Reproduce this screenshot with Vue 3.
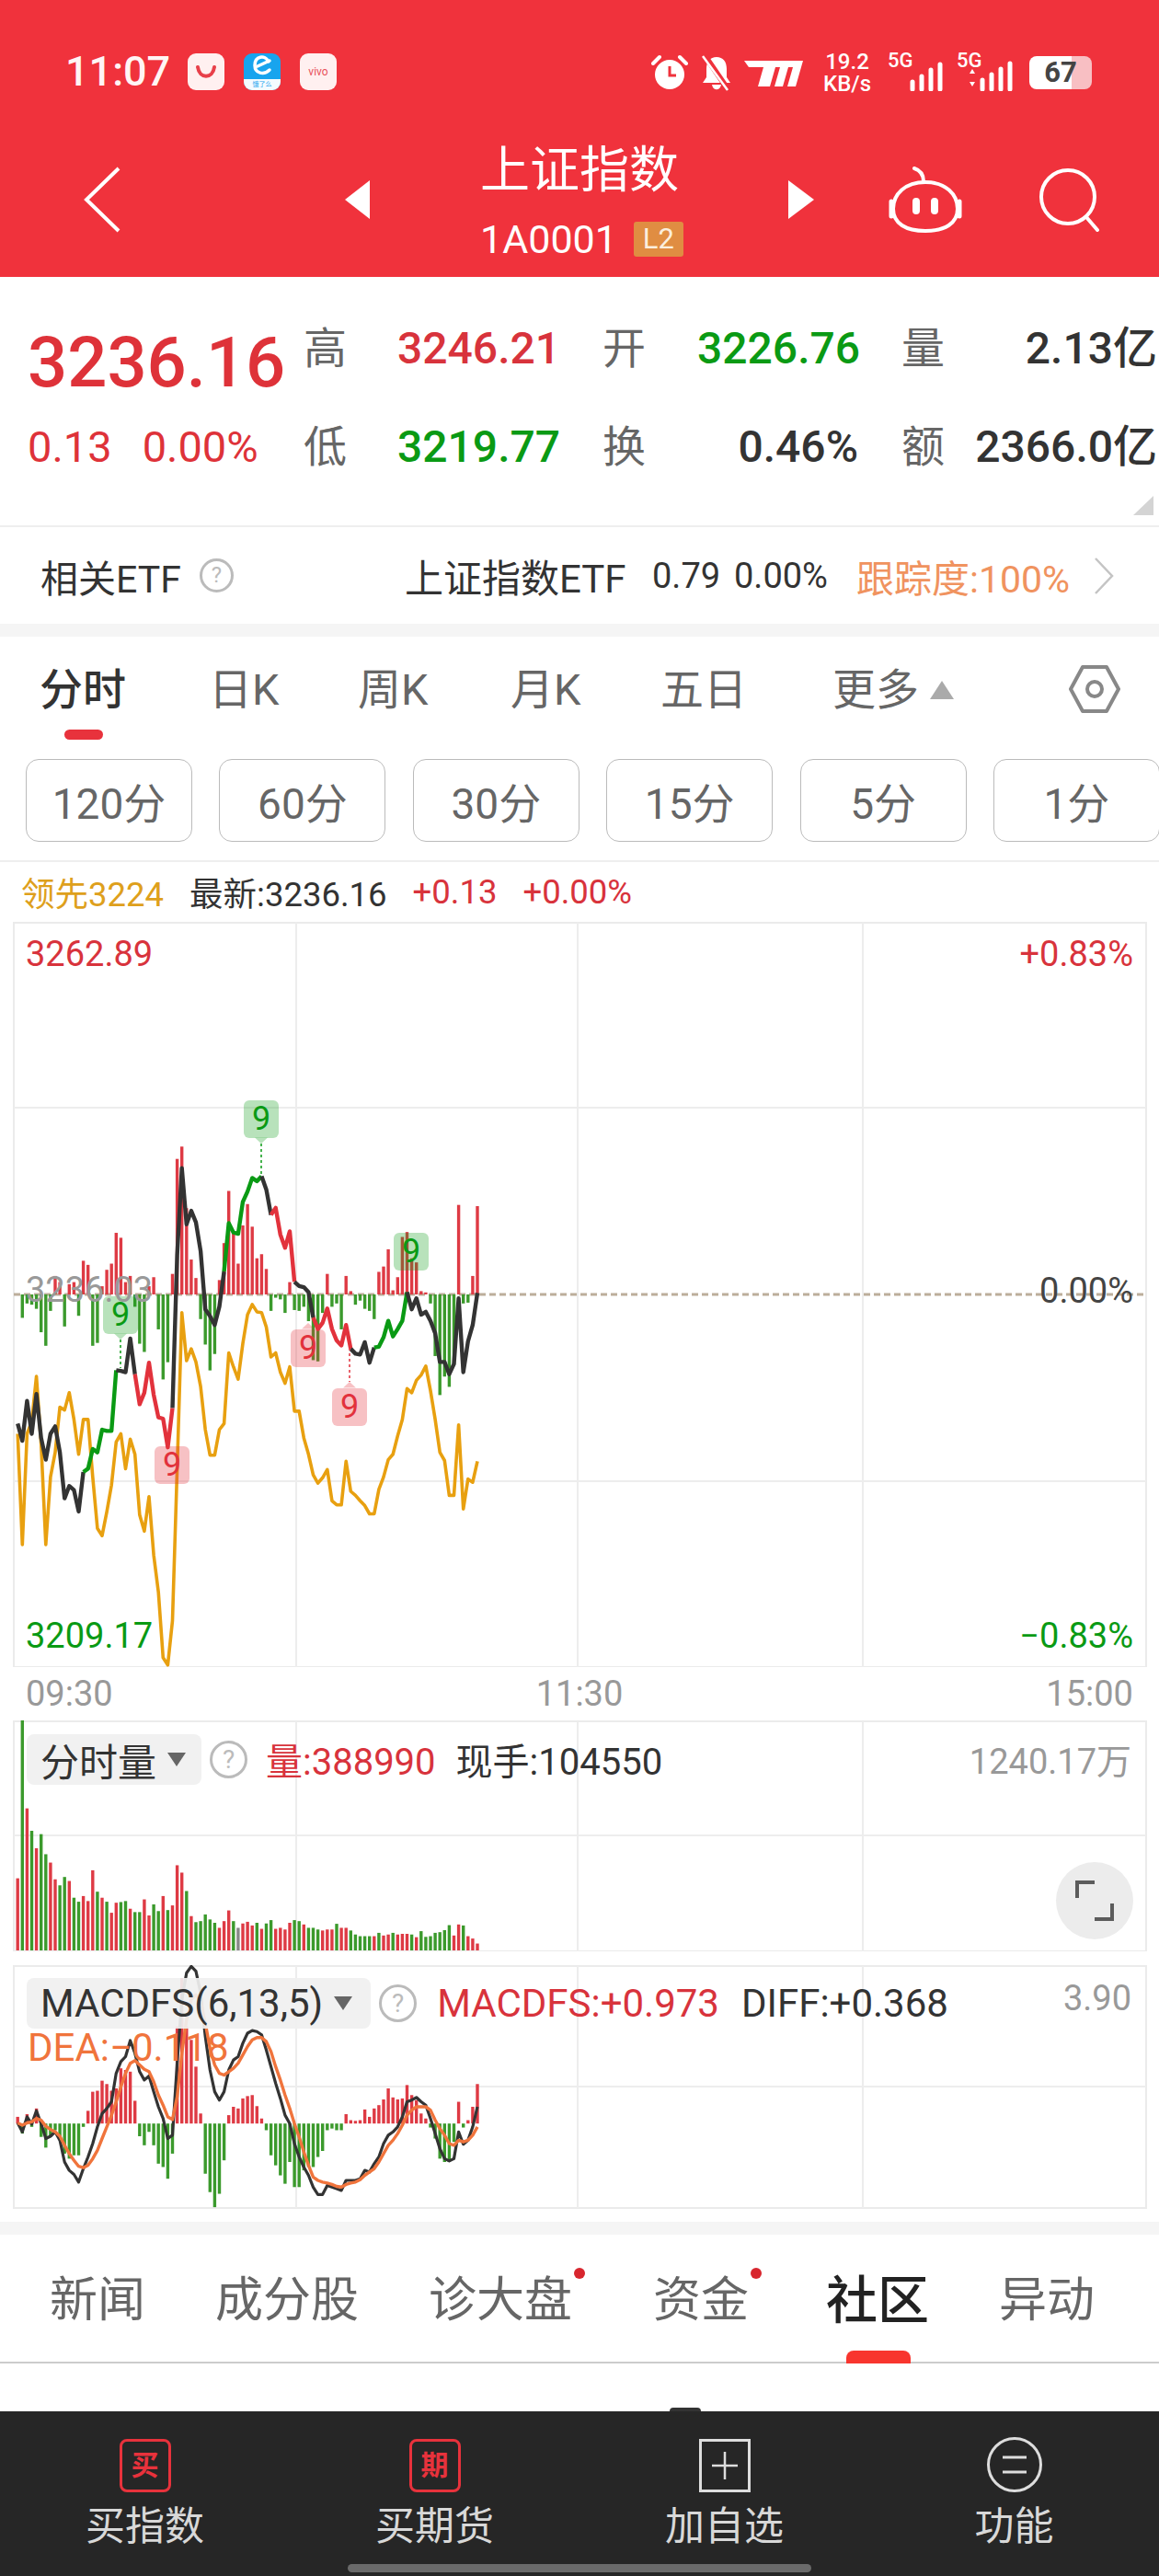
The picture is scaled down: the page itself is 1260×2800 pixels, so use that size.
<template>
  <div class="page">
    <header class="top">
      <div class="status">
        <span class="clock">11:07</span>
        <span class="app-ico white">
          <svg width="24" height="14" viewBox="0 0 24 14"><path d="M3 2c2 13 16 13 18 0" fill="none" stroke="#e8404a" stroke-width="4" stroke-linecap="round" /></svg>
        </span>
        <span class="app-ico blue">
          <svg width="30" height="28" viewBox="0 0 30 28"><path d="M22 9C18 1 7 3 7 13c0 9 10 11 16 5M10 14l13-6" fill="none" stroke="#fff" stroke-width="3.5" stroke-linecap="round" /></svg>
          <em>饿了么</em>
        </span>
        <span class="app-ico white vivo">vivo</span>
        <div class="status-right">
          <svg class="st-alarm" width="40" height="40" viewBox="0 0 40 40">
            <circle cx="20" cy="22" r="16" fill="#fff" />
            <path d="M20 13v10h7" fill="none" stroke="#ef323c" stroke-width="3" />
            <path d="M2 10l7-7M38 10l-7-7" stroke="#fff" stroke-width="4" stroke-linecap="round" />
          </svg>
          <svg class="st-bell" width="34" height="40" viewBox="0 0 34 40">
            <path d="M17 3c-7 0-11 5-11 13v9l-4 6h30l-4-6v-9c0-8-4-13-11-13zM12 33c1 7 9 7 10 0z" fill="#fff" />
            <path d="M4 1l26 38" stroke="#ef323c" stroke-width="6" />
            <path d="M2 2l27 37" stroke="#fff" stroke-width="2.5" />
          </svg>
          <svg class="st-logo" width="64" height="30" viewBox="0 0 64 30">
            <path d="M0 2h64l-8 28h-9l6-21h-5l-6 21h-9l6-21h-5l-6 21H15l6-21H5z" fill="#fff" />
          </svg>
          <span class="speed"><b>19.2</b><b>KB/s</b></span>
          <span class="signal">
            <i class="net">5G</i>
            <svg width="44" height="34" viewBox="0 0 44 34"><path d="M3 24v8M13 18v14M23 11v21M33 5v27" stroke="#fff" stroke-width="5" stroke-linecap="round" transform="translate(4 0)" /></svg>
          </span>
          <span class="signal second">
            <i class="net">5G</i>
            <svg width="54" height="34" viewBox="0 0 54 34"><path d="M3 15l3-5 3 5zM3 24l3 5 3-5z" fill="#fff" /><path d="M17 22v10M27 16v16M37 10v22M47 4v28" stroke="#fff" stroke-width="5" stroke-linecap="round" /></svg>
          </span>
          <span class="battery"><span class="bat-num">67</span></span>
        </div>
      </div>
      <div class="nav">
        <svg class="back" width="42" height="74" viewBox="0 0 42 74"><path d="M39 3L4 37l35 34" fill="none" stroke="#fff" stroke-width="4" /></svg>
        <span class="tri tri-left"></span>
        <div class="title-block">
          <div class="title">上证指数</div>
          <div class="code">1A0001<span class="l2">L2</span></div>
        </div>
        <span class="tri tri-right"></span>
        <svg class="robot" width="80" height="72" viewBox="0 0 80 72">
          <path d="M28 2c6 2 10 6 10 14" fill="none" stroke="#fff" stroke-width="4" stroke-linecap="round" />
          <path d="M40 17C18 17 5 30 5 46c0 16 14 24 35 24s35-8 35-24c0-16-13-29-35-29z" fill="none" stroke="#fff" stroke-width="4" />
          <path d="M3 38v16M77 38v16" stroke="#fff" stroke-width="5" stroke-linecap="round" />
          <path d="M30 38v10M50 38v10" stroke="#fff" stroke-width="8" stroke-linecap="round" />
        </svg>
        <svg class="search" width="68" height="70" viewBox="0 0 68 70"><circle cx="32" cy="32" r="29" fill="none" stroke="#fff" stroke-width="4" /><path d="M52 54l12 14" stroke="#fff" stroke-width="4" stroke-linecap="round" /></svg>
      </div>
    </header>

    <section class="quote">
      <div class="quote-grid">
        <div class="big-price">3236.16</div>
        <span class="lab">高</span><span class="val red">3246.21</span>
        <span class="lab">开</span><span class="val green">3226.76</span>
        <span class="lab last-col">量</span><span class="val dark end">2.13亿</span>

        <div class="change"><span>0.13</span><span>0.00%</span></div>
        <span class="lab">低</span><span class="val green">3219.77</span>
        <span class="lab">换</span><span class="val dark end">0.46%</span>
        <span class="lab last-col">额</span><span class="val dark end">2366.0亿</span>
      </div>
      <div class="corner-row"><span class="corner"></span></div>
    </section>

    <section class="etf">
      <span class="etf-name">相关ETF</span>
      <span class="qmark etf-q">?</span>
      <span class="etf-fund">上证指数ETF</span>
      <span class="etf-num">0.79</span>
      <span class="etf-num second">0.00%</span>
      <span class="etf-track">跟踪度:100%</span>
      <svg class="etf-arrow" width="24" height="42" viewBox="0 0 24 42"><path d="M3 2l18 19L3 40" fill="none" stroke="#c4c4c4" stroke-width="2.5" /></svg>
    </section>

    <div class="band"></div>

    <nav class="periods">
      <span class="period active">分时</span>
      <span class="period">日K</span>
      <span class="period">周K</span>
      <span class="period">月K</span>
      <span class="period">五日</span>
      <span class="period more">更多<i class="up"></i></span>
      <svg class="hex" width="56" height="54" viewBox="0 0 56 54">
        <path d="M15 3h26l13 24-13 24H15L2 27z" fill="none" stroke="#888" stroke-width="4" stroke-linejoin="round" />
        <circle cx="28" cy="27" r="8" fill="none" stroke="#888" stroke-width="4" />
      </svg>
    </nav>

    <div class="minutes">
      <button v-for="m in minutes" :key="m" class="minute">{{ m }}</button>
    </div>

    <div class="legend">
      <span class="gold">领先3224</span>
      <span class="ink">最新:3236.16</span>
      <span class="red">+0.13</span>
      <span class="red">+0.00%</span>
    </div>

    <div class="chart price">
      <svg width="1260" height="810" viewBox="0 0 1260 810">
        <rect x="15" y="1" width="1231" height="809" class="frame" />
        <path d="M15 202H1246M15 608H1246M322 1V810M628 1V810M938 1V810" class="grid" />
        <line x1="15" y1="405" x2="1246" y2="405" class="zero" />
        <rect
          v-for="b in priceBars" :key="b.x"
          :x="b.x" :y="b.y" width="3.4" :height="b.h" :fill="b.fill"
        />
        <polyline :points="goldLine" class="line gold-line" />
        <polyline
          v-for="s in priceSegments" :key="s.from"
          :points="s.points" :stroke="s.color" class="line thick"
        />
        <g v-for="t in tags" :key="t.x">
          <line v-if="t.stem" :x1="t.x" :x2="t.x" :y1="t.stem[0]" :y2="t.stem[1]" :stroke="t.color" class="stem" />
          <rect :x="t.x - 19" :y="t.y - 20" width="38" height="41" rx="6" :fill="t.bg" />
          <polygon v-if="t.dir" :points="`${t.x - 7},${t.y + t.dir * 20.5} ${t.x + 7},${t.y + t.dir * 20.5} ${t.x},${t.y + t.dir * 27}`" :fill="t.bg" />
          <text :x="t.x" :y="t.y + 12" text-anchor="middle" :fill="t.color" class="tag-text">9</text>
        </g>
      </svg>
      <span class="tick tl red">3262.89</span>
      <span class="tick tr red">+0.83%</span>
      <span class="tick ml">3236.03</span>
      <span class="tick mr ink-soft">0.00%</span>
      <span class="tick bl green">3209.17</span>
      <span class="tick br green">−0.83%</span>
    </div>

    <div class="times"><span>09:30</span><span>11:30</span><span>15:00</span></div>

    <div class="chart volume">
      <svg width="1260" height="251" viewBox="0 0 1260 251">
        <rect x="15" y="1" width="1231" height="250" class="frame" />
        <path d="M15 125H1246M322 1V251M628 1V251M938 1V251" class="grid" />
        <rect
          v-for="b in volumeBars" :key="b.x"
          :x="b.x" :y="b.y" width="3.4" :height="b.h" :fill="b.fill"
        />
      </svg>
      <div class="indicator-row vol-row">
        <span class="chip">分时量<i class="down"></i></span>
        <span class="qmark chip-q">?</span>
        <span class="red ind-a">量:388990</span>
        <span class="ink ind-b">现手:104550</span>
      </div>
      <span class="scale vol-scale">1240.17万</span>
      <span class="expand">
        <svg width="44" height="46" viewBox="0 0 44 46"><path d="M3 20V3h19M41 26v17H22" fill="none" stroke="#5c5c5c" stroke-width="4" /></svg>
      </span>
    </div>

    <div class="chart macd">
      <svg width="1260" height="265" viewBox="0 0 1260 265">
        <rect x="15" y="1" width="1231" height="263" class="frame" />
        <path d="M15 132H1246M322 1V264M628 1V264M938 1V264" class="grid" />
        <rect
          v-for="b in macdBars" :key="b.x"
          :x="b.x" :y="b.y" width="3.4" :height="b.h" :fill="b.fill"
        />
        <polyline :points="macdLine" class="line dark-line" />
        <polyline :points="deaLine" class="line dea-line" />
      </svg>
      <div class="indicator-row macd-row">
        <span class="chip">MACDFS(6,13,5)<i class="down"></i></span>
        <span class="qmark chip-q">?</span>
        <span class="red ind-a">MACDFS:+0.973</span>
        <span class="ink ind-b">DIFF:+0.368</span>
      </div>
      <span class="dea">DEA:−0.118</span>
      <span class="scale macd-scale">3.90</span>
    </div>

    <div class="band bottom-band"></div>

    <nav class="news-tabs">
      <span class="news">新闻</span>
      <span class="news">成分股</span>
      <span class="news dot">诊大盘</span>
      <span class="news dot">资金</span>
      <span class="news current">社区</span>
      <span class="news">异动</span>
    </nav>

    <div class="blank"><span class="dome"></span></div>

    <footer class="actions">
      <div class="action"><span class="box red-box">买</span><span>买指数</span></div>
      <div class="action"><span class="box red-box">期</span><span>买期货</span></div>
      <div class="action">
        <span class="box plain">
          <svg width="30" height="32" viewBox="0 0 30 32"><path d="M15 1v30M1 16h28" stroke="#ddd" stroke-width="2.5" /></svg>
        </span>
        <span>加自选</span>
      </div>
      <div class="action">
        <span class="box round">
          <svg width="30" height="22" viewBox="0 0 30 22"><path d="M2 3h26M2 19h26" stroke="#ddd" stroke-width="3" /></svg>
        </span>
        <span>功能</span>
      </div>
      <span class="home-bar"></span>
    </footer>
  </div>
</template>

<script setup>
const minutes = ['120分', '60分', '30分', '15分', '5分', '1分']

const RED = '#de3a44'
const GREEN = '#3b9a2c'

// 所有数据都是从截图上量出来的，x 按 99 个点等距排
const xAt = (i) => 19.2 + i * 5.1

// 价格线 y（放大图坐标）
const priceY = [890,932,835,915,818,925,978,915,897,960,1072,1042,1052,1104,1008,1000,952,960,905,908,908,760,762,765,683,770,843,815,742,820,875,878,948,852,480,268,405,372,400,470,612,628,650,605,520,402,425,428,350,325,292,300,288,320,382,365,430,462,422,545,555,558,570,632,660,645,610,660,688,700,650,708,720,722,692,742,705,703,680,640,678,660,640,570,612,585,625,618,640,670,740,740,770,745,585,765,690,650,572]
const goldY = [915,1185,915,885,775,940,1185,1020,960,850,857,815,880,965,880,880,1020,1145,1163,1105,1040,935,915,1000,928,965,1112,1152,1068,1210,1300,1460,1478,1370,1000,620,737,708,740,800,905,967,967,905,890,718,752,782,695,625,600,618,620,655,728,718,765,792,752,860,860,925,965,1015,1035,1022,1002,1078,1088,1088,982,1055,1065,1078,1090,1110,1110,1050,1020,978,965,920,880,805,815,785,772,750,810,880,960,980,1065,1065,893,1098,1025,1033,982]
const flowBars = [0,-57,-22,-25,-35,-92,-125,-40,45,30,-78,25,30,-52,82,72,-125,-118,20,60,75,150,138,30,45,-30,-120,-140,20,42,-85,-207,-165,50,330,360,210,85,40,-60,-122,-185,-145,35,125,252,148,75,168,220,165,88,98,62,-40,-8,-12,-45,30,-38,-40,-30,-65,-160,-163,-45,50,-30,-22,-85,45,8,-25,-15,-35,-40,-60,55,68,110,10,42,140,152,88,78,8,5,-22,-150,-245,-200,-225,-170,218,-22,-20,45,215]
// 量：负数是绿柱
const volumeTops = [527,-52,318,-385,437,-395,-455,480,530,-548,-523,535,-585,-597,580,595,503,-567,585,-597,630,600,-598,-595,618,-628,-628,590,638,-605,-625,580,-622,608,488,510,-565,640,-658,-655,-635,-650,-660,675,655,623,-655,-675,662,657,668,-660,678,-662,-652,678,675,680,660,-652,-655,665,-675,-675,-680,683,680,680,-663,675,675,-683,-695,-700,-700,-700,700,-690,698,695,-690,695,693,693,-695,703,-685,-702,-700,-690,-688,-682,-667,698,665,-668,700,707,722]
const macdHist = [20,-30,28,-10,45,-40,-72,-40,-20,-50,-90,-105,-95,-95,-10,38,95,98,128,118,98,105,165,160,155,68,-38,-65,-25,-65,-120,-130,-165,-90,290,435,290,250,170,30,-150,-205,-250,-210,-110,25,50,45,75,82,85,52,15,-20,-95,-125,-155,-180,-115,-190,-190,-140,-130,-130,-100,-82,-20,-15,-20,-20,28,10,8,10,42,20,45,55,72,105,78,72,75,115,85,70,30,15,-12,-45,-105,-115,-115,-55,65,-12,10,50,118]
const macdY = [1258,1285,1240,1262,1222,1260,1305,1298,1285,1310,1375,1400,1412,1435,1395,1360,1320,1270,1230,1215,1195,1110,1075,1060,1012,1050,1105,1130,1118,1165,1210,1245,1305,1295,1080,890,810,790,805,870,1000,1100,1165,1190,1165,1100,1070,1060,1020,990,982,985,995,1040,1090,1140,1185,1235,1260,1320,1360,1390,1415,1450,1472,1472,1445,1450,1455,1460,1430,1430,1430,1425,1400,1405,1380,1360,1320,1295,1285,1270,1240,1195,1190,1182,1195,1205,1245,1290,1335,1365,1372,1365,1285,1322,1310,1270,1210]
const deaY = [1258,1265,1258,1255,1245,1250,1268,1278,1285,1298,1325,1350,1370,1388,1392,1385,1365,1340,1305,1270,1235,1195,1150,1110,1080,1072,1085,1098,1105,1135,1175,1205,1240,1248,1180,1050,950,890,875,895,960,1035,1085,1110,1115,1105,1095,1080,1055,1030,1010,1003,1003,1015,1045,1090,1130,1175,1215,1260,1300,1345,1385,1420,1430,1435,1438,1442,1448,1450,1442,1438,1435,1428,1415,1405,1395,1375,1350,1325,1310,1290,1265,1235,1220,1210,1210,1210,1220,1250,1275,1295,1320,1325,1310,1315,1310,1295,1270]

const py = (z) => 148 + z / 2.24 // 价格区 svg 内 y
const my = (z) => -286 + z / 2.75 // macd 区 svg 内 y
const vy = (z) => z / 2.75 - 20 // 量区 svg 内 y

const toPoints = (ys, fy, from = 0, to = ys.length - 1) =>
  ys.slice(from, to + 1).map((v, i) => `${xAt(i + from).toFixed(1)},${fy(v).toFixed(1)}`).join(' ')

const goldLine = toPoints(goldY, py)
const macdLine = toPoints(macdY, my)
const deaLine = toPoints(deaY, my)

const priceSegments = [
  [0, 14, '#333'], [14, 21, '#0a9a14'], [21, 25, '#333'], [25, 33, '#e2323c'],
  [33, 44, '#333'], [44, 52, '#0a9a14'], [52, 54, '#333'], [54, 59, '#e2323c'],
  [59, 63, '#333'], [63, 71, '#e2323c'], [71, 76, '#333'], [76, 83, '#0a9a14'],
  [83, 98, '#333'],
].map(([from, to, color]) => ({ from, color, points: toPoints(priceY, py, from, to) }))

const barsFrom = (values, zeroY, scale) =>
  values.map((v, i) => ({
    x: xAt(i) - 1.7,
    y: v >= 0 ? zeroY - v / scale : zeroY,
    h: Math.abs(v) / scale,
    fill: v >= 0 ? RED : GREEN,
  }))

const priceBars = barsFrom(flowBars, 405, 2.24)
const macdBars = barsFrom(macdHist, my(1260), 2.75)
const volumeBars = volumeTops.map((v, i) => ({
  x: xAt(i) - 1.7,
  y: vy(Math.abs(v)),
  h: 250 - vy(Math.abs(v)),
  fill: i === 47 ? '#888' : v >= 0 ? RED : GREEN,
}))

const greenTag = { color: '#0a9a14', bg: 'rgba(20,160,30,.3)' }
const redTag = { color: '#e2323c', bg: 'rgba(230,50,60,.3)' }
const tags = [
  { ...greenTag, x: 284, y: 214, dir: 1, stem: [241, 276] },
  { ...greenTag, x: 131, y: 427, dir: 1, stem: [454, 485] },
  { ...greenTag, x: 447, y: 358, dir: 0 },
  { ...redTag, x: 187, y: 590, dir: 0 },
  { ...redTag, x: 335, y: 463, dir: -1 },
  { ...redTag, x: 380, y: 527, dir: -1, stem: [463, 500] },
]
</script>

<style scoped>
.page {
  width: 1260px;
  height: 2800px;
  background: #fff;
  color: #333;
  font-family: Roboto, "Noto Sans CJK SC", sans-serif;
  overflow: hidden;
}

.red { color: #d8333c; }
.green { color: #0a9a14; }
.dark { color: #333; }
.ink { color: #333; }
.gold { color: #dea01c; }

/* 顶部 */
.top {
  position: relative;
  height: 301px;
  background: #f0323c;
  color: #fff;
}
.status {
  height: 153px;
  box-sizing: border-box;
  padding: 58px 0 0 71px;
  display: flex;
  align-items: flex-start;
}
.clock {
  width: 133px;
  font-size: 45px;
  line-height: 40px;
  font-weight: 500;
  color: #fff5f5;
}
.app-ico {
  width: 40px;
  height: 40px;
  margin-right: 21px;
  border-radius: 9px;
  display: flex;
  flex-direction: column;
  align-items: center;
  justify-content: center;
  overflow: hidden;
}
.app-ico.white { background: #fff0f0; }
.app-ico.blue { background: #18a4ee; justify-content: flex-start; }
.app-ico.blue em {
  width: 100%;
  font-size: 7px;
  line-height: 12px;
  text-align: center;
  font-style: normal;
  background: #f4fbff;
  color: #18a4ee;
}
.vivo {
  font-size: 12px;
  color: #e8505a;
}
.status-right {
  position: absolute;
  top: 58px;
  left: 708px;
  width: 480px;
  height: 42px;
  display: flex;
  align-items: center;
}
.st-bell { margin-left: 14px; }
.st-logo { margin-left: 13px; }
.speed {
  width: 60px;
  margin-left: 18px;
  display: flex;
  flex-direction: column;
  align-items: center;
  font-size: 24px;
  line-height: 24px;
}
.speed b { font-weight: 500; }
.signal {
  position: relative;
  width: 64px;
  height: 40px;
  margin-left: 14px;
  display: flex;
  justify-content: flex-end;
  align-items: flex-end;
}
.signal.second {
  width: 65px;
  margin-left: 11px;
}
.net {
  position: absolute;
  top: -6px;
  left: 0;
  font-style: normal;
  font-size: 22px;
  font-weight: 500;
}
.battery {
  width: 68px;
  height: 36px;
  margin-left: 14px;
  border-radius: 8px;
  background: linear-gradient(90deg, #fff 0, #fff 68%, #f8bfc3 68%);
  display: flex;
  justify-content: center;
}
.bat-num {
  font-size: 31px;
  line-height: 36px;
  font-weight: 700;
  color: #444;
}

.nav {
  height: 127px;
  padding-left: 90px;
  display: flex;
  align-items: center;
}
.tri {
  width: 0;
  height: 0;
  border-top: 21px solid transparent;
  border-bottom: 21px solid transparent;
}
.tri-left { margin-left: 243px; border-right: 27px solid #fff; }
.tri-right { margin-left: 113px; border-left: 28px solid #fff; }
.title-block {
  width: 222px;
  margin-left: 120px;
  align-self: flex-start;
  padding-top: 3px;
}
.title {
  font-size: 54px;
  line-height: 60px;
  margin-bottom: 24px;
  white-space: nowrap;
}
.code {
  display: flex;
  align-items: center;
  height: 40px;
  font-size: 43px;
  white-space: nowrap;
}
.l2 {
  width: 54px;
  height: 38px;
  margin-left: 18px;
  background: #e08d42;
  border-radius: 3px;
  text-align: center;
  font-size: 31px;
  line-height: 38px;
  color: #fbeedd;
}
.robot { margin-left: 81px; }
.search { margin-left: 83px; }

/* 报价 */
.quote {
  height: 272px;
  box-sizing: border-box;
  padding: 24px 2px 0 30px;
  border-bottom: 2px solid #eee;
}
.quote-grid {
  display: grid;
  grid-template-columns: 300px 102px 223px 103px 175px 47px 48px 230px;
  grid-template-rows: 107px 107px;
}
.big-price {
  align-self: end;
  font-size: 76px;
  line-height: 76px;
  font-weight: 500;
  color: #de3239;
}
.change {
  display: flex;
  gap: 33px;
  align-self: center;
  font-size: 47px;
  color: #de3239;
}
.lab {
  font-size: 47px;
  line-height: 107px;
  color: #666;
}
.lab.last-col { grid-column: 7; }
.val {
  font-size: 48px;
  line-height: 107px;
  font-weight: 500;
  white-space: nowrap;
}
.val.end { text-align: right; }
.corner-row {
  display: flex;
  justify-content: flex-end;
  padding-right: 4px;
}
.corner {
  width: 22px;
  height: 21px;
  background: #d4d4d4;
  clip-path: polygon(100% 0, 100% 100%, 0 100%);
}

/* ETF */
.etf {
  height: 105px;
  padding-left: 44px;
  display: flex;
  align-items: center;
  white-space: nowrap;
}
.etf-name { font-size: 41px; color: #333; width: 173px; }
.qmark {
  box-sizing: border-box;
  border-radius: 50%;
  border: 3px solid #bbb;
  color: #bbb;
  text-align: center;
}
.etf-q {
  width: 37px;
  height: 37px;
  font-size: 24px;
  line-height: 31px;
}
.etf-fund { margin-left: 186px; width: 269px; font-size: 42px; color: #333; }
.etf-num { font-size: 38px; color: #333; width: 89px; }
.etf-num.second { width: 133px; }
.etf-track { font-size: 41px; color: #f0935f; width: 257px; }
.etf-arrow { flex: none; }

.band {
  height: 14px;
  background: #f5f5f5;
}

/* 周期 */
.periods {
  height: 133px;
  box-sizing: border-box;
  padding: 30px 0 0 43px;
  display: grid;
  grid-template-columns: 184px 162px 166px 163px 187px 257px 56px;
  align-items: start;
}
.period {
  font-size: 47px;
  line-height: 56px;
  color: #666;
  white-space: nowrap;
}
.period.active { color: #333; font-weight: 500; position: relative; }
.period.active::after {
  content: "";
  position: absolute;
  left: 27px;
  top: 71px;
  width: 42px;
  height: 11px;
  border-radius: 6px;
  background: #e8323c;
}
.more { display: flex; align-items: center; }
.up {
  margin-left: 12px;
  border-left: 13px solid transparent;
  border-right: 13px solid transparent;
  border-bottom: 20px solid #aaa;
}

.minutes {
  height: 112px;
  box-sizing: border-box;
  padding-left: 28px;
  display: flex;
  gap: 29.4px;
  border-bottom: 2px solid #eee;
}
.minute {
  flex: none;
  width: 181px;
  height: 90px;
  padding: 0;
  background: #fff;
  border: 1.5px solid #bbb;
  border-radius: 14px;
  font-family: inherit;
  font-size: 46px;
  color: #666;
}

.legend {
  height: 65px;
  padding-left: 23px;
  display: flex;
  align-items: center;
  gap: 28px;
  font-size: 36.5px;
}

/* 图表 */
.chart {
  position: relative;
}
.chart svg { display: block; }
.frame { fill: none; stroke: #ebebeb; stroke-width: 2; }
.grid { fill: none; stroke: #ededed; stroke-width: 2; }
.zero { stroke: #bcae9b; stroke-width: 3; stroke-dasharray: 7 4; }
.line { fill: none; stroke-width: 3; stroke-linejoin: round; }
.thick { stroke-width: 4.4; }
.gold-line { stroke: #e8a010; stroke-width: 3.6; }
.dark-line { stroke: #333; stroke-width: 3.2; }
.dea-line { stroke: #f0743c; stroke-width: 3.4; }
.stem { stroke-width: 1.5; stroke-dasharray: 3 3; }
.tag-text { font-size: 36px; font-family: Roboto, sans-serif; }

.tick {
  position: absolute;
  font-size: 38px;
  line-height: 44px;
  white-space: nowrap;
}
.tl { left: 28px; top: 13px; }
.tr { right: 28px; top: 13px; }
.ml { left: 28px; top: 378px; color: #999; }
.mr { right: 28px; top: 379px; }
.ink-soft { color: #444; }
.bl { left: 28px; bottom: 12px; }
.br { right: 28px; bottom: 12px; }

.times {
  height: 58px;
  padding: 0 28px;
  display: flex;
  justify-content: space-between;
  align-items: center;
  font-size: 38px;
  color: #999;
}

.volume { height: 251px; margin-bottom: 15px; }
.macd { height: 265px; }
.indicator-row {
  position: absolute;
  left: 29px;
  display: flex;
  align-items: center;
  white-space: nowrap;
}
.vol-row { top: 13px; }
.macd-row { top: 14px; font-size: 42px; }
.chip {
  height: 55px;
  padding: 0 17px 0 15px;
  border-radius: 8px;
  background: rgba(240, 240, 240, .92);
  display: flex;
  align-items: center;
  font-size: 42px;
  color: #333;
}
.macd-row .chip { padding-right: 20px; }
.down {
  margin-left: 12px;
  border-left: 10px solid transparent;
  border-right: 10px solid transparent;
  border-top: 15px solid #666;
}
.chip-q {
  width: 41px;
  height: 41px;
  margin-left: 9px;
  font-size: 28px;
  line-height: 35px;
  border-width: 3px;
}
.ind-a { margin-left: 20px; font-size: 40px; }
.ind-b { margin-left: 22px; font-size: 40px; }
.macd-row .ind-a, .macd-row .ind-b { font-size: 42px; }
.macd-row .ind-a { margin-left: 22px; }
.macd-row .ind-b { margin-left: 24px; }
.scale {
  position: absolute;
  right: 30px;
  font-size: 38px;
  color: #999;
}
.vol-scale { top: 14px; }
.macd-scale { top: 14px; }
.expand {
  position: absolute;
  left: 1148px;
  top: 154px;
  width: 84px;
  height: 84px;
  border-radius: 50%;
  background: #ececec;
  display: flex;
  align-items: center;
  justify-content: center;
}
.dea {
  position: absolute;
  left: 30px;
  top: 65px;
  font-size: 42px;
  line-height: 50px;
  color: #f0743c;
}

.bottom-band { margin-top: 14px; }

/* 资讯 tab */
.news-tabs {
  height: 140px;
  box-sizing: border-box;
  padding: 42px 0 0 54px;
  border-bottom: 2px solid #ccc;
  display: grid;
  grid-template-columns: 180px 232px 244px 188px 188px 100px;
  align-items: start;
}
.news {
  position: relative;
  width: max-content;
  font-size: 52px;
  line-height: 60px;
  color: #666;
}
.news.dot::after {
  content: "";
  position: absolute;
  right: -14px;
  top: -6px;
  width: 12px;
  height: 12px;
  border-radius: 50%;
  background: #d8262e;
}
.news.current {
  font-size: 56px;
  font-weight: 500;
  color: #222;
}
.news.current::after {
  content: "";
  position: absolute;
  left: 22px;
  top: 84px;
  width: 70px;
  height: 14px;
  border-radius: 8px 8px 0 0;
  background: #f8352e;
}
.blank {
  height: 52px;
  display: flex;
  justify-content: flex-start;
  align-items: flex-end;
  padding-left: 728px;
}
.dome {
  width: 34px;
  height: 4px;
  border-radius: 17px 17px 0 0;
  background: #333;
}

/* 底部 */
.actions {
  position: relative;
  height: 179px;
  background: #262626;
  display: grid;
  grid-template-columns: repeat(4, 315px);
}
.action {
  display: flex;
  flex-direction: column;
  align-items: center;
  font-size: 43px;
  line-height: 52px;
  color: #d8d8d8;
}
.box {
  box-sizing: border-box;
  width: 56px;
  height: 58px;
  margin: 30px 0 11px;
  display: flex;
  align-items: center;
  justify-content: center;
}
.red-box {
  border: 3px solid #e8323c;
  border-radius: 8px;
  font-size: 30px;
  font-weight: 700;
  color: #e8323c;
  line-height: 1;
}
.plain { border: 3px solid #ddd; }
.round {
  width: 60px;
  height: 60px;
  margin-top: 28px;
  border: 3px solid #ddd;
  border-radius: 50%;
}
.home-bar {
  position: absolute;
  left: 378px;
  bottom: 4px;
  width: 504px;
  height: 9px;
  border-radius: 5px;
  background: #6a6a6a;
}
</style>
